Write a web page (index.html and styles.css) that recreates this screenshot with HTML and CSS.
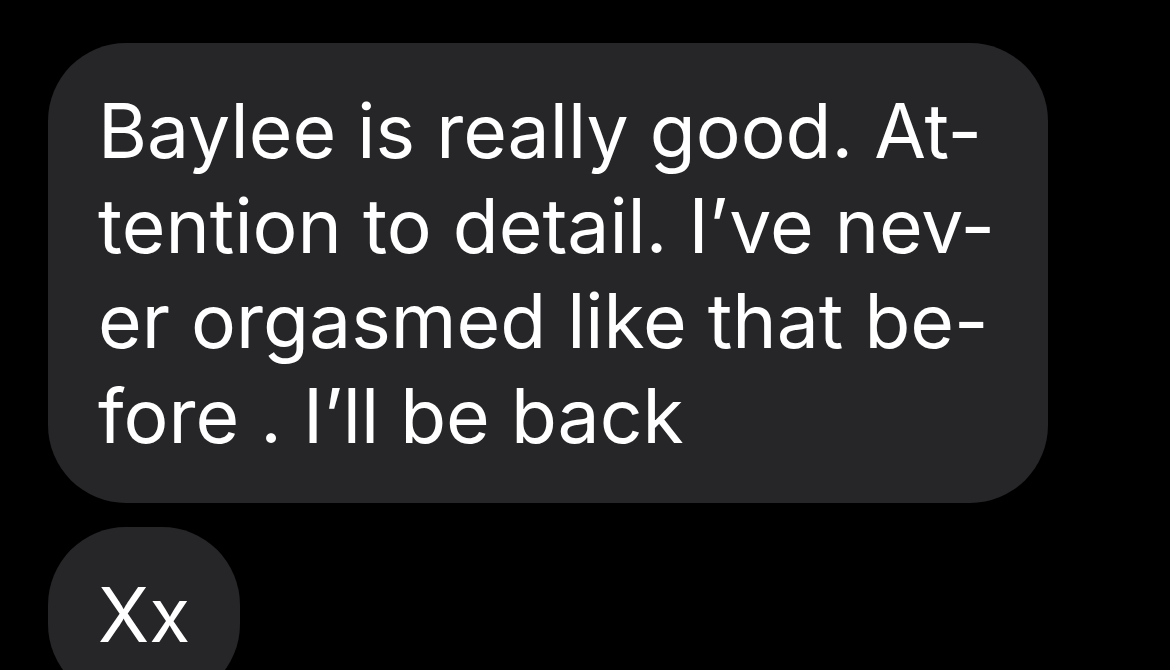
FILE: index.html
```html
<!DOCTYPE html>
<html lang="en">

<head>
    <meta charset="UTF-8">
    <meta name="viewport" content="width=device-width, initial-scale=1.0">
    <title>Messages</title>

    <link rel="stylesheet" href="styles.css">
</head>

<body>
    <main class="thread">
        <div class="bubble wide">
            Baylee is really good. At-<br>
            tention to detail. I’ve nev-<br>
            er orgasmed like that be-<br>
            fore . I’ll be back
        </div>
        <div class="bubble">Xx</div>
    </main>
</body>

</html>
```

FILE: styles.css
```css
body {
    background: #000;
    margin: 0;
    height: 100vh;
    overflow: hidden;
    font-family: Inter, "Noto Sans", sans-serif;
}

.thread {
    display: flex;
    flex-direction: column;
    align-items: flex-start;
    gap: 24px;
    padding: 43px 0 0 48px;
}

.bubble {
    background: #262629;
    color: #fff;
    font-size: 75px;
    line-height: 95px;
    padding: 40px 50px;
    border-radius: 78px;
    white-space: nowrap;
}

.wide {
    width: 900px;
}
```
